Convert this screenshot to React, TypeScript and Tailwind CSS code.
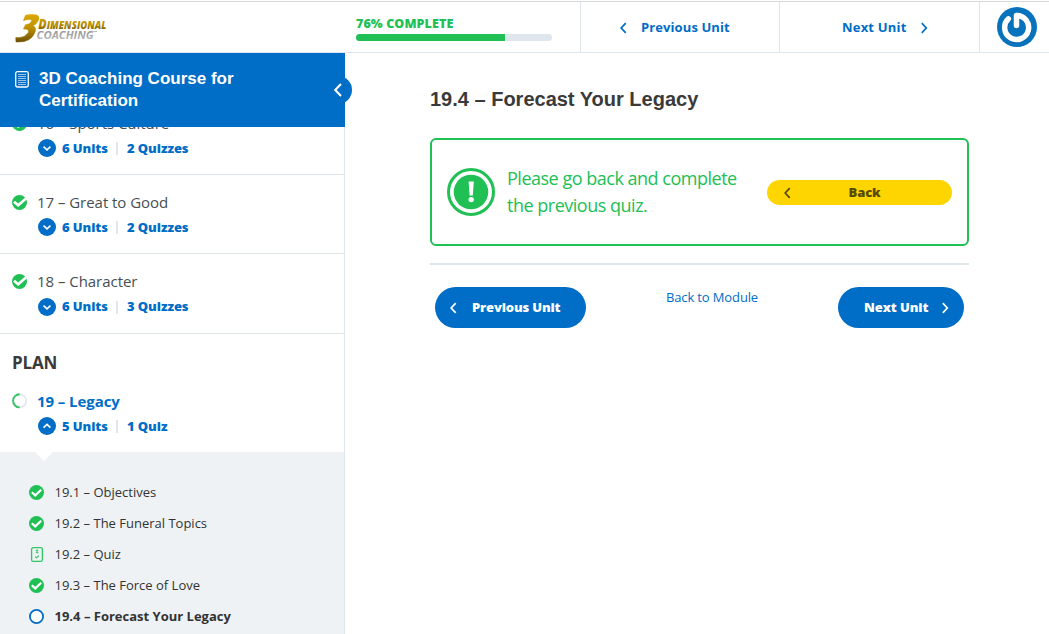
import React from "react";

function Chevron({ dir, className }: { dir: "left" | "right" | "up" | "down"; className?: string }) {
  const paths = {
    left: "M6.7 1.2 2.2 6l4.500 4.800",
    right: "M1.800 1.200 6.300 6l-4.500 4.800",
    up: "M0.5 7.600 4 4.300 7.500 7.600",
    down: "M0.5 4.600 4 7.900 7.500 4.600",
  };
  return (
    <svg viewBox="0 0 8 12" width="8" height="12" fill="none" stroke="currentColor" strokeWidth="1.7" className={className}>
      <path d={paths[dir]} />
    </svg>
  );
}

function ModuleCheck() {
  return (
    <svg width="16" height="16" viewBox="0 0 16 16" className="mt-px shrink-0">
      <circle cx="7.5" cy="7.5" r="7.5" fill="#21c055" />
      <path d="M2 6.800 6.200 10.300 14.800 2.800" fill="none" stroke="#fff" strokeWidth="2.7" />
    </svg>
  );
}

function UnitCheck() {
  return (
    <svg width="15" height="15" viewBox="0 0 15 15" className="shrink-0">
      <circle cx="7.5" cy="7.5" r="7.5" fill="#21c055" />
      <path d="M2.800 7.300 6.200 10.400 12.200 4.700" fill="none" stroke="#fff" strokeWidth="2.2" />
    </svg>
  );
}

function QuizIcon() {
  return (
    <svg width="15" height="15" viewBox="0 0 15 15" fill="none" stroke="#35c565" className="shrink-0">
      <rect x="2.6" y="0.7" width="10.8" height="13.6" rx="1.6" strokeWidth="1.3" />
      <path d="M6.6 3.2h2.8M6.8 5.8h2.6M8 3v3" strokeWidth="1.1" />
      <path d="M6 9.6 7.4 10.8 10 8.8" strokeWidth="1.1" />
    </svg>
  );
}

function Ring() {
  return (
    <svg width="15" height="15" viewBox="0 0 15 15" className="shrink-0">
      <circle cx="7.5" cy="7.5" r="6.6" fill="#fff" stroke="#006dc6" strokeWidth="1.8" />
    </svg>
  );
}

function HalfRing() {
  return (
    <svg width="16" height="16" viewBox="0 0 16 16" fill="none" strokeWidth="1.9" className="shrink-0">
      <circle cx="7.5" cy="7.8" r="6.6" stroke="#e4eaef" />
      <path d="M7.7 1.2A6.6 6.6 0 0 0 7.7 14.400" stroke="#35c565" />
    </svg>
  );
}

function Logo() {
  return (
    <svg width="98" height="34" viewBox="0 0 98 34" className="ml-[14px] mt-[9px]">
      <defs>
        <linearGradient id="gold" x1="0" y1="0" x2="0" y2="1">
          <stop offset="0" stopColor="#dba800" />
          <stop offset=".5" stopColor="#bd9000" />
          <stop offset="1" stopColor="#6d5000" />
        </linearGradient>
        <linearGradient id="silver" x1="0" y1="0" x2="0" y2="1">
          <stop offset="0" stopColor="#858585" />
          <stop offset="1" stopColor="#c4c4c4" />
        </linearGradient>
      </defs>
      <path
        d="M11.500 4.200Q17 2.800 22.500 4Q26.200 5.400 24.300 9.600Q22.800 13 19 14.800Q22.500 16.200 21.200 20.500Q19.500 26 14.500 28.800Q10 31.500 2 30.900L1.800 26.600Q9 27 12 24Q15 21.500 14.500 19.500Q13.500 17.600 9.500 18L11.500 13.800Q15 13.400 16.800 11.500Q18.500 9.200 16.500 8.600Q14 8 9.500 9.500z"
        fill="url(#gold)"
        stroke="url(#gold)"
        strokeWidth=".6"
      />
      <g fontFamily="Open Sans, sans-serif" fontStyle="italic">
        <text x="24.300" y="17.500" fontSize="13.500" fontWeight="800" fill="url(#gold)" textLength="68" lengthAdjust="spacingAndGlyphs">
          D<tspan fontSize="10.500">IMENSIONAL</tspan>
        </text>
        <text x="22.500" y="28" fontSize="11" fontWeight="700" fill="url(#silver)" textLength="57" lengthAdjust="spacingAndGlyphs">COACHING</text>
      </g>
      <path d="M79.500 20.500h3.500" stroke="#bbb" />
    </svg>
  );
}

function Counts({ units, quizzes, open, raised }: { units: string; quizzes: string; open?: boolean; raised?: boolean }) {
  const shift = raised ? "-mt-[2px]" : "";
  return (
    <div className="ml-[38px] flex h-[18px] items-center text-[13px] font-extrabold leading-[18px] tracking-[-0.08px] text-[#006dc6]">
      <span className="flex h-[18px] w-[18px] items-center justify-center rounded-full bg-[#006dc6] text-white">
        <Chevron dir={open ? "up" : "down"} />
      </span>
      <span className={`ml-[6px] w-[46px] whitespace-nowrap ${shift}`}>{units}</span>
      <span className="ml-[8px] h-[13px] w-[2px] bg-[#e0e6ed]" />
      <span className={`ml-[9px] whitespace-nowrap ${shift}`}>{quizzes}</span>
    </div>
  );
}

function ModuleRow({ title, quizzes, tall }: { title: string; quizzes: string; tall?: boolean }) {
  return (
    <div className={`shrink-0 border-b border-[#dfe5ec] pt-4 ${tall ? "h-[80px]" : "h-[79px]"}`}>
      <div className={`flex h-[22px] items-center pl-3 ${tall ? "mb-[6px]" : "mb-[5px]"}`}>
        <ModuleCheck />
        <span className="ml-[9px] text-[15px] leading-[22px] tracking-[-0.04px] text-[#474f54]">{title}</span>
      </div>
      <Counts units="6 Units" quizzes={quizzes} raised={tall} />
    </div>
  );
}

const units = [
  { title: "19.1 – Objectives", icon: <UnitCheck /> },
  { title: "19.2 – The Funeral Topics", icon: <UnitCheck /> },
  { title: "19.2 – Quiz", icon: <QuizIcon /> },
  { title: "19.3 – The Force of Love", icon: <UnitCheck /> },
  { title: "19.4 – Forecast Your Legacy", icon: <Ring />, current: true },
];

function Sidebar() {
  return (
    <aside className="flex h-full w-[345px] shrink-0 flex-col">
      <div className="relative z-10 flex h-[74px] shrink-0 bg-[#006dc6] pl-[15px] pt-[15px] text-white">
        <svg width="14" height="18" viewBox="0 0 14 18" fill="none" stroke="#fff" className="mt-[2px]">
          <rect x="0.700" y="1.700" width="12.600" height="15.300" rx="1.800" strokeWidth="1.300" />
          <path d="M3 4.500h8M3 6.500h8M3 8.500h8M3 10.500h8M3 12.500h8M3 14.500h8" strokeWidth=".7" opacity=".85" />
        </svg>
        <h2 className="ml-[10px] w-[230px] font-['Liberation_Sans',sans-serif] text-[17px] font-bold leading-[22px]">
          3D Coaching Course for Certification
        </h2>
        <button className="absolute left-[324px] top-[23px] flex h-[28px] w-[28px] items-center justify-center rounded-full bg-[#006dc6]">
          <svg width="9" height="14" viewBox="0 0 9 14" fill="none" stroke="#fff" strokeWidth="2">
            <path d="M7 1 1.200 7l5.800 6" />
          </svg>
        </button>
      </div>
      <div className="flex min-h-0 flex-1 flex-col overflow-hidden border-r border-[#dfe5ec]">
        <div className="-mt-[31px] flex flex-col">
          <ModuleRow title="16 – Sports Culture" quizzes="2 Quizzes" />
          <ModuleRow title="17 – Great to Good" quizzes="2 Quizzes" />
          <ModuleRow title="18 – Character" quizzes="3 Quizzes" tall />
        </div>
        <h3 className="mt-[17px] h-[24px] shrink-0 pl-3 text-[17px] font-bold leading-[24px] tracking-[-0.2px] text-[#3a3a3a]">PLAN</h3>
        <div className="mt-[15px] flex h-[22px] shrink-0 items-center pl-3">
          <HalfRing />
          <span className="ml-[9px] text-[15px] font-bold leading-[22px] tracking-[-0.07px] text-[#006dc6]">19 – Legacy</span>
        </div>
        <div className="mt-[5px] shrink-0">
          <Counts units="5 Units" quizzes="1 Quiz" open />
        </div>
        <div className="mt-[17px] flex-1 bg-[#eef2f5]">
          <svg width="18" height="9" viewBox="0 0 18 9" className="ml-[35px] block">
            <path d="M0 0h18L9 9z" fill="#fff" />
          </svg>
          <ul className="mt-[16px]">
            {units.map((u) => (
              <li key={u.title} className="flex h-[31px] items-center pl-[29px]">
                {u.icon}
                <span className={`-mt-[2px] ml-[10.500px] text-[13px] leading-[20px] text-[#333] ${u.current ? "font-bold" : ""}`}>{u.title}</span>
              </li>
            ))}
          </ul>
        </div>
      </div>
    </aside>
  );
}

function Avatar() {
  return (
    <svg width="40" height="40" viewBox="0 0 40 40" className="ml-[17px] mt-[5px]">
      <circle cx="20" cy="20" r="20" fill="#0873bd" />
      <g fill="none" strokeLinecap="round" strokeLinejoin="round">
        <path d="M11.400 11.800A12 12 0 1 0 19.500 8.500V18.500" stroke="#075b96" strokeWidth="6" opacity=".5" transform="translate(.3 .6)" />
        <path d="M11.400 11.800A12 12 0 1 0 19.500 8.500V18.500" stroke="#fff" strokeWidth="5.500" />
      </g>
    </svg>
  );
}

export default function App() {
  return (
    <div className="flex h-[634px] w-[1049px] flex-col overflow-hidden bg-white pt-px font-['Open_Sans','Noto_Sans',sans-serif]">
      <header className="flex h-[52px] shrink-0 border-y border-t-[#d7dadd] border-b-[#dfe5ee]">
        <div className="w-[345px]">
          <Logo />
        </div>
        <div className="w-[235px] pl-[11px] pt-[13px]">
          <div className="h-[18px] text-[12.500px] font-extrabold leading-[18px] tracking-[0.1px] text-[#21c055]">76% COMPLETE</div>
          <div className="mt-px h-[7px] w-[196px] overflow-hidden rounded-full bg-[#e0e6ed]">
            <div className="h-full w-[149px] bg-[#21c055]" />
          </div>
        </div>
        <a className="flex w-[199px] items-center border-l border-[#dfe5ee] pl-[38px] pt-px text-[13px] font-bold text-[#006dc6]">
          <Chevron dir="left" />
          <span className="ml-[14px] tracking-[0.1px]">Previous Unit</span>
        </a>
        <a className="flex w-[200px] items-center border-l border-[#dfe5ee] pl-[62px] pt-px text-[13px] font-bold text-[#006dc6]">
          <span className="w-[65px] whitespace-nowrap tracking-[0.2px]">Next Unit</span>
          <Chevron dir="right" className="ml-[13px]" />
        </a>
        <div className="flex-1 border-l border-[#dfe5ee]">
          <Avatar />
        </div>
      </header>
      <div className="flex min-h-0 flex-1">
        <Sidebar />
        <main className="w-[624px] pl-[85px] pt-[33px]">
          <h1 className="h-[26px] font-['Liberation_Sans',sans-serif] text-[20px] font-bold leading-[26px] text-[#3a3a3a]">
            19.4 – Forecast Your Legacy
          </h1>
          <section className="mt-[26px] flex h-[108px] items-center rounded-[6px] border-2 border-[#21c055] pl-[15px] pr-[15px]">
            <svg width="48" height="48" viewBox="0 0 48 48" className="shrink-0">
              <circle cx="24" cy="24" r="22.500" fill="#fff" stroke="#21c055" strokeWidth="3" />
              <circle cx="24" cy="24" r="17.300" fill="#21c055" />
              <path d="M21.600 13.500h5.200l-1 14h-3.200z" fill="#fff" />
              <circle cx="24.200" cy="31.600" r="2.700" fill="#fff" />
            </svg>
            <p className="ml-[12px] w-[248px] text-[18px] leading-[27px] tracking-[-0.49px] text-[#21c055]">
              Please go back and complete<br />the previous quiz.
            </p>
            <button className="ml-auto flex h-[25px] w-[185px] items-center rounded-full bg-[#ffd500] pl-[16px] pt-px text-[13px] font-extrabold text-[#574a05]">
              <Chevron dir="left" />
              <span className="flex-1 pr-[14px] text-center tracking-[-0.1px]">Back</span>
            </button>
          </section>
          <div className="mt-[17px] h-[2px] bg-[#e0e6ee]" />
          <div className="mt-[22px] flex justify-between px-[5px]">
            <button className="flex h-[41px] w-[151px] items-center rounded-full bg-[#006dc6] pl-[14px] text-[13px] font-extrabold text-white">
              <Chevron dir="left" />
              <span className="ml-[15px] whitespace-nowrap tracking-[-0.15px]">Previous Unit</span>
            </button>
            <a className="h-[20px] text-[13px] leading-[20px] tracking-[-0.13px] text-[#006dc6]">Back to Module</a>
            <button className="flex h-[41px] w-[126px] items-center rounded-full bg-[#006dc6] pl-[26px] text-[13px] font-extrabold text-white">
              <span className="w-[64px] whitespace-nowrap text-left tracking-[-0.1px]">Next Unit</span>
              <Chevron dir="right" className="ml-[13px]" />
            </button>
          </div>
        </main>
      </div>
    </div>
  );
}
